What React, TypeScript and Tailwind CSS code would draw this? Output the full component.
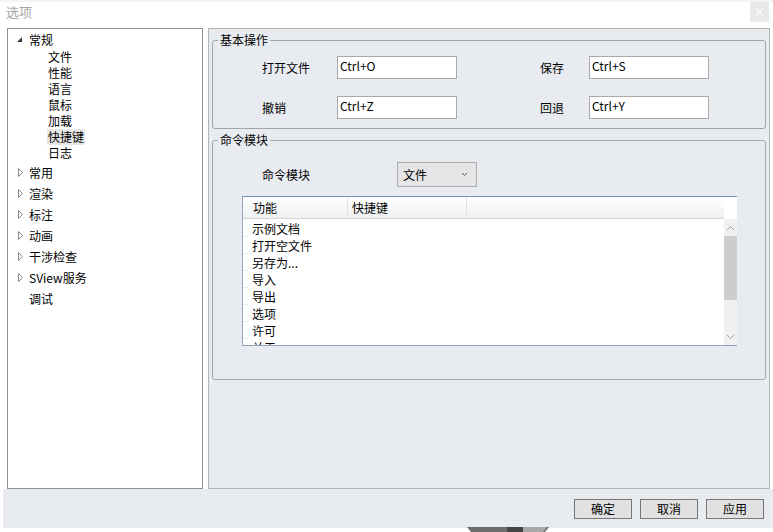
import React from 'react'

const generalChildren = ['文件', '性能', '语言', '鼠标', '加载', '快捷键', '日志']

const topNodes = [
  { label: '常用', expandable: true },
  { label: '渲染', expandable: true },
  { label: '标注', expandable: true },
  { label: '动画', expandable: true },
  { label: '干涉检查', expandable: true },
  { label: 'SView服务', expandable: true },
  { label: '调试', expandable: false },
]

const commands = ['示例文档', '打开空文件', '另存为...', '导入', '导出', '选项', '许可', '关于']

function ExpandedArrow() {
  return (
    <svg width="13" height="8" viewBox="0 0 13 8">
      <polygon points="6,1 6,6 1,6" fill="#3c3c3c" />
    </svg>
  )
}

function CollapsedArrow() {
  return (
    <svg width="13" height="9" viewBox="0 0 13 9">
      <polygon points="2.5,0.5 6.5,4.5 2.5,8.5" fill="none" stroke="#8a8a8a" strokeWidth="1" />
    </svg>
  )
}

function Tree() {
  return (
    <div className="w-[196px] border border-[#8e8f99] bg-white text-[12px] text-black">
      <div className="pt-[2px]">
        <div className="flex h-[18px] items-center pl-[8px] leading-[18px]">
          <span className="flex w-[13px] items-center">
            <ExpandedArrow />
          </span>
          <span>常规</span>
        </div>
        {generalChildren.map((c) => (
          <div key={c} className="flex h-[16px] items-center pl-[39px] leading-[16px]">
            <span className={c === '快捷键' ? 'bg-[#e6e6e6] px-[1px]' : 'px-[1px]'}>{c}</span>
          </div>
        ))}
        <div className="mt-[1px]">
          {topNodes.map((n) => (
            <div key={n.label} className="flex h-[21px] items-center pl-[8px] leading-[21px]">
              <span className="flex w-[13px] items-center">{n.expandable && <CollapsedArrow />}</span>
              <span>{n.label}</span>
            </div>
          ))}
        </div>
      </div>
    </div>
  )
}

function ShortcutInput({ value }: { value: string }) {
  return (
    <div className="h-[23px] w-[120px] border border-[#a9a9a9] bg-white pl-[2px] pt-[1px] text-[12px] leading-[16px]">
      {value}
    </div>
  )
}

function GroupBox({ title, className, children }: { title: string; className?: string; children: React.ReactNode }) {
  return (
    <fieldset className={`rounded-[3px] border border-[#a4a4a4] px-0 ${className ?? ''}`}>
      <legend className="ml-[5px] px-[2px] text-[12px] leading-[16px]">{title}</legend>
      {children}
    </fieldset>
  )
}

function ScrollBar() {
  return (
    <div className="flex w-[13px] flex-col bg-[#f0f0f0]">
      <div className="flex h-[17px] items-center justify-center">
        <svg width="9" height="6" viewBox="0 0 9 6">
          <polyline points="1,5 4.5,1.5 8,5" fill="none" stroke="#a6a6a6" strokeWidth="1" />
        </svg>
      </div>
      <div className="h-[64px] bg-[#cdcdcd]" />
      <div className="flex-1" />
      <div className="flex h-[17px] items-center justify-center">
        <svg width="9" height="6" viewBox="0 0 9 6">
          <polyline points="1,1 4.5,4.5 8,1" fill="none" stroke="#a6a6a6" strokeWidth="1" />
        </svg>
      </div>
    </div>
  )
}

function CommandTable() {
  return (
    <div className="ml-[29px] mt-[9px] flex h-[150px] w-[495px] flex-col border-l border-t border-b border-l-[#9aa6b8] border-t-[#6f8fc0] border-b-[#8fa2bc] bg-white text-[12px]">
      <div className="flex h-[22px] shrink-0">
        <div className="flex flex-1 border-b border-[#d5d5d5] bg-gradient-to-b from-white to-[#eef0f2]">
          <div className="w-[5px]" />
          <div className="w-[100px] border-r border-[#e2e2e2] pl-[5px] leading-[22px]">功能</div>
          <div className="w-[119px] border-r border-[#e2e2e2] pl-[4px] leading-[22px]">快捷键</div>
          <div className="flex-1" />
        </div>
        <div className="w-[13px]" />
      </div>
      <div className="flex min-h-0 flex-1">
        <div className="flex-1 overflow-hidden pt-[1px]">
          {commands.map((c) => (
            <div key={c} className="flex h-[17px]">
              <div className="w-[5px] border-b border-[#ececec]" />
              <div className="pl-[4px] leading-[17px]">{c}</div>
            </div>
          ))}
        </div>
        <ScrollBar />
      </div>
    </div>
  )
}

function Button({ label }: { label: string }) {
  return (
    <button className="h-[20px] w-[58px] border border-[#777777] bg-[#e1e1e1] text-[12px] leading-[16px] text-black">
      {label}
    </button>
  )
}

export default function App() {
  return (
    <div className="relative h-[532px] w-[773px] overflow-hidden bg-white font-['Noto_Sans_CJK_SC',sans-serif] text-black">
      {/* Title bar */}
      <div className="flex h-[28px] items-start justify-between border-t-2 border-[#f4f4f4] pl-[6px] pr-[4px]">
        <span className="pt-[1px] text-[13px] leading-[18px] text-[#a5a5a5]">选项</span>
        <div className="flex h-[20px] w-[19px] items-center justify-center bg-[#e9e9e9] text-[12px] leading-none text-white">
          ×
        </div>
      </div>

      {/* Main */}
      <div className="flex h-[461px] gap-[5px] pl-[7px]">
        <Tree />
        <div className="w-[562px] border border-[#b4b4b4] bg-[#e8ebf0] px-[3px] pt-[3px] text-[12px]">
          <GroupBox title="基本操作" className="h-[97px]">
            <div className="flex flex-col gap-[17px] pl-[49px] pt-[8px]">
              <div className="flex items-center">
                <span className="w-[75px]">打开文件</span>
                <ShortcutInput value="Ctrl+O" />
                <span className="ml-[83px] w-[49px]">保存</span>
                <ShortcutInput value="Ctrl+S" />
              </div>
              <div className="flex items-center">
                <span className="w-[75px]">撤销</span>
                <ShortcutInput value="Ctrl+Z" />
                <span className="ml-[83px] w-[49px]">回退</span>
                <ShortcutInput value="Ctrl+Y" />
              </div>
            </div>
          </GroupBox>
          <GroupBox title="命令模块" className="mt-[3px] h-[248px]">
            <div className="flex items-center pl-[49px] pt-[14px]">
              <span className="w-[135px]">命令模块</span>
              <div className="flex h-[25px] w-[80px] items-center justify-between border border-[#adadad] bg-[#e5e5e5] pl-[5px] pr-[8px]">
                <span>文件</span>
                <svg width="7" height="5" viewBox="0 0 7 5">
                  <polyline points="1,1 3.5,3.5 6,1" fill="none" stroke="#606060" strokeWidth="1" />
                </svg>
              </div>
            </div>
            <CommandTable />
          </GroupBox>
        </div>
      </div>

      {/* Bottom buttons */}
      <div className="ml-[3px] flex h-[39px] items-start justify-end gap-[8px] bg-[#e8ebf0] pr-[9px] pt-[10px]">
        <Button label="确定" />
        <Button label="取消" />
        <Button label="应用" />
      </div>

      {/* partly visible shape below the dialog */}
      <svg className="absolute left-[467px] top-[527px]" width="82" height="5" viewBox="0 0 82 5">
        <polygon points="0,0 82,0 78,5 4,5" fill="#6e6e6e" />
        <rect x="40" y="0" width="16" height="5" fill="#454545" />
        <polygon points="56,0 80,0 76,5 56,5" fill="#a8a8a8" />
      </svg>
    </div>
  )
}
